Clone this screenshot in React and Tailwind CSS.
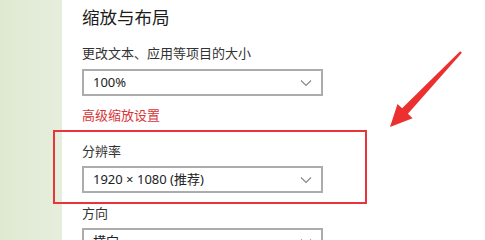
const font = { fontFamily: '"Noto Sans", "Noto Sans CJK SC", sans-serif' };

function Chevron() {
  return (
    <svg width="12" height="7" viewBox="0 0 12 7" className="absolute right-[9px] top-1/2 -translate-y-1/2">
      <path d="M1 1 L6 6 L11 1" fill="none" stroke="#8a8a8a" strokeWidth="1.2" />
    </svg>
  );
}

function Select({ value }) {
  return (
    <div className="relative w-[241px] h-[27px] border-2 border-[#acacac] bg-white flex items-center pl-[9px] text-[13px] text-[#222]">
      {value}
      <Chevron />
    </div>
  );
}

export default function App() {
  return (
    <div className="relative w-[485px] h-[240px] overflow-hidden bg-white flex" style={font}>
      <div className="w-[62px] h-full bg-gradient-to-r from-[#dfe9d2] to-[#e6eedc]" />

      <div className="flex-1 pl-[20px] pt-[5px] flex flex-col">
        <h1 className="text-[17.5px] leading-[24px] text-[#1c1c1c]">缩放与布局</h1>
        <p className="mt-[15px] text-[13px] leading-[18px] text-[#333]">更改文本、应用等项目的大小</p>
        <div className="mt-[7px]">
          <Select value="100%" />
        </div>
        <p className="mt-[10px] text-[13px] leading-[18px] text-[#d7353a]">高级缩放设置</p>
        <p className="mt-[18px] text-[13px] leading-[18px] text-[#333]">分辨率</p>
        <div className="mt-[6px]">
          <Select value="1920 × 1080 (推荐)" />
        </div>
        <p className="mt-[11px] text-[13px] leading-[18px] text-[#333]">方向</p>
        <div className="mt-[6px]">
          <Select value="横向" />
        </div>
      </div>

      {/* annotation box */}
      <div className="absolute left-[53px] top-[130px] w-[314px] h-[74px] border-2 border-[#e8343a]" />

      {/* annotation arrow */}
      <svg className="absolute left-0 top-0" width="485" height="240" viewBox="0 0 485 240">
        <polygon
          points="461.9,52.8 407.9,113.7 412.6,118.2 390,127 397.5,103.9 402.1,108.3 460.1,51.2"
          fill="#ec3030"
        />
      </svg>
    </div>
  );
}
